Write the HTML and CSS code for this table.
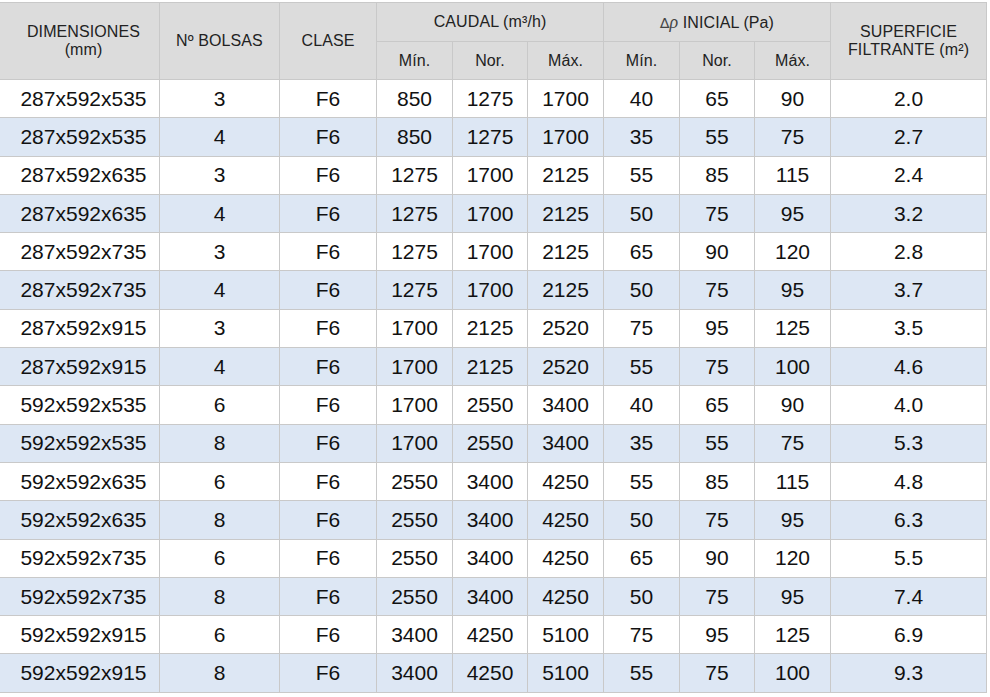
FILE: index.html
```html
<!DOCTYPE html>
<html lang="es">
<head>
<meta charset="utf-8">
<title>Filtros de bolsas</title>
<link rel="stylesheet" href="styles.css">
</head>
<body>
<table class="spec">
  <colgroup>
    <col class="c-dim"><col class="c-bol"><col class="c-cla">
    <col class="c-n"><col class="c-n2"><col class="c-n">
    <col class="c-n"><col class="c-n2"><col class="c-n">
    <col class="c-sup">
  </colgroup>
  <thead>
    <tr class="h1">
      <th rowspan="2" class="first">DIMENSIONES<br>(mm)</th>
      <th rowspan="2">Nº BOLSAS</th>
      <th rowspan="2">CLASE</th>
      <th colspan="3">CAUDAL (m³/h)</th>
      <th colspan="3"><span class="sym">∆<i>ρ</i></span> INICIAL (Pa)</th>
      <th rowspan="2">SUPERFICIE<br>FILTRANTE (m²)</th>
    </tr>
    <tr class="h2">
      <th>Mín.</th><th>Nor.</th><th>Máx.</th>
      <th>Mín.</th><th>Nor.</th><th>Máx.</th>
    </tr>
  </thead>
  <tbody>
    <tr><td>287x592x535</td><td>3</td><td>F6</td><td>850</td><td>1275</td><td>1700</td><td>40</td><td>65</td><td>90</td><td>2.0</td></tr>
    <tr><td>287x592x535</td><td>4</td><td>F6</td><td>850</td><td>1275</td><td>1700</td><td>35</td><td>55</td><td>75</td><td>2.7</td></tr>
    <tr><td>287x592x635</td><td>3</td><td>F6</td><td>1275</td><td>1700</td><td>2125</td><td>55</td><td>85</td><td>115</td><td>2.4</td></tr>
    <tr><td>287x592x635</td><td>4</td><td>F6</td><td>1275</td><td>1700</td><td>2125</td><td>50</td><td>75</td><td>95</td><td>3.2</td></tr>
    <tr><td>287x592x735</td><td>3</td><td>F6</td><td>1275</td><td>1700</td><td>2125</td><td>65</td><td>90</td><td>120</td><td>2.8</td></tr>
    <tr><td>287x592x735</td><td>4</td><td>F6</td><td>1275</td><td>1700</td><td>2125</td><td>50</td><td>75</td><td>95</td><td>3.7</td></tr>
    <tr><td>287x592x915</td><td>3</td><td>F6</td><td>1700</td><td>2125</td><td>2520</td><td>75</td><td>95</td><td>125</td><td>3.5</td></tr>
    <tr><td>287x592x915</td><td>4</td><td>F6</td><td>1700</td><td>2125</td><td>2520</td><td>55</td><td>75</td><td>100</td><td>4.6</td></tr>
    <tr><td>592x592x535</td><td>6</td><td>F6</td><td>1700</td><td>2550</td><td>3400</td><td>40</td><td>65</td><td>90</td><td>4.0</td></tr>
    <tr><td>592x592x535</td><td>8</td><td>F6</td><td>1700</td><td>2550</td><td>3400</td><td>35</td><td>55</td><td>75</td><td>5.3</td></tr>
    <tr><td>592x592x635</td><td>6</td><td>F6</td><td>2550</td><td>3400</td><td>4250</td><td>55</td><td>85</td><td>115</td><td>4.8</td></tr>
    <tr><td>592x592x635</td><td>8</td><td>F6</td><td>2550</td><td>3400</td><td>4250</td><td>50</td><td>75</td><td>95</td><td>6.3</td></tr>
    <tr><td>592x592x735</td><td>6</td><td>F6</td><td>2550</td><td>3400</td><td>4250</td><td>65</td><td>90</td><td>120</td><td>5.5</td></tr>
    <tr><td>592x592x735</td><td>8</td><td>F6</td><td>2550</td><td>3400</td><td>4250</td><td>50</td><td>75</td><td>95</td><td>7.4</td></tr>
    <tr><td>592x592x915</td><td>6</td><td>F6</td><td>3400</td><td>4250</td><td>5100</td><td>75</td><td>95</td><td>125</td><td>6.9</td></tr>
    <tr><td>592x592x915</td><td>8</td><td>F6</td><td>3400</td><td>4250</td><td>5100</td><td>55</td><td>75</td><td>100</td><td>9.3</td></tr>
  </tbody>
</table>
</body>
</html>
```

FILE: styles.css
```css
html, body {
  margin: 0;
  padding: 0;
  background: #ffffff;
}

body {
  padding-top: 2px;
  font-family: "Liberation Sans", Arial, sans-serif;
}

.spec {
  border-collapse: collapse;
  table-layout: fixed;
  width: 987px;
  margin-left: -1px;
}

.c-dim { width: 160px; }
.c-bol { width: 120px; }
.c-cla { width: 97px; }
.c-n { width: 76px; }
.c-n2 { width: 75px; }
.c-sup { width: 156px; }

.spec th,
.spec td {
  border: 1px solid #c9c9c9;
  text-align: center;
  vertical-align: middle;
  padding: 0;
}

.spec th {
  background: #dcdcdc;
  color: #222222;
  font-weight: normal;
  font-size: 16px;
  line-height: 18px;
  letter-spacing: 0.1px;
}

.spec thead {
  border-top: 1px solid #ececec;
}

.h1 th { height: 38px; }
.h2 th { height: 37px; }

.spec th.first,
.spec td:first-child {
  padding-left: 8px;
}

.sym {
  font-family: "DejaVu Sans", sans-serif;
  font-size: 14px;
  color: #444;
}

.sym i {
  font-style: italic;
  font-family: "Liberation Serif", serif;
  font-size: 18px;
}

.spec td {
  height: 37.3px;
  font-size: 21px;
  color: #111111;
  background: #ffffff;
}

.spec tbody tr:nth-child(even) td {
  background: #dde7f4;
}
```
